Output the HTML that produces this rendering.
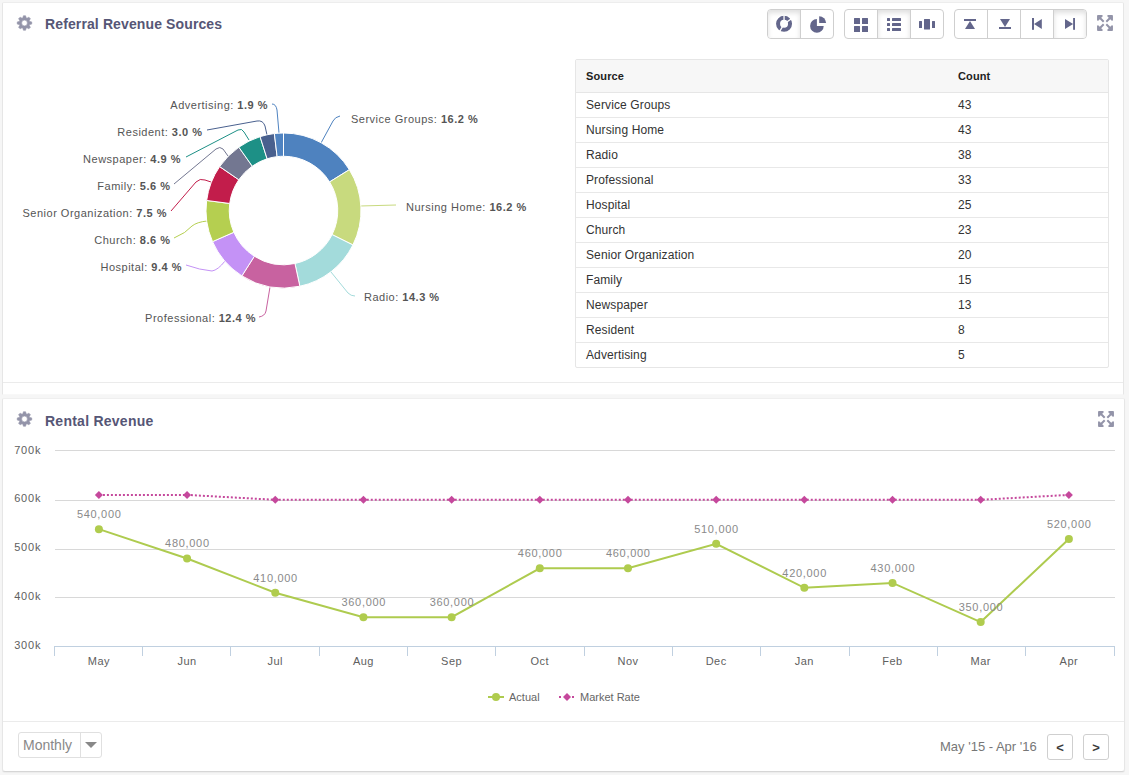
<!DOCTYPE html>
<html><head><meta charset="utf-8"><style>
*{margin:0;padding:0;box-sizing:border-box}
html,body{width:1129px;height:775px;overflow:hidden;background:#f6f6f6;font-family:"Liberation Sans",sans-serif}
.abs{position:absolute}
.panel{position:absolute;background:#fff;border:1px solid #e6e6e6;border-radius:3px}
.title{position:absolute;font-weight:bold;font-size:14px;color:#565676;line-height:16px;letter-spacing:0.12px}
.gear{position:absolute;width:16px;height:16px}
.bg{position:absolute;top:9px;height:30px;border:1px solid #cfcfcf;border-radius:4px;background:#fff;display:flex;overflow:hidden}
.bt{height:28px;width:33px;position:relative;border-left:1px solid #cfcfcf}
.bt:first-child{border-left:none;width:32px}
.bt.act{box-shadow:inset 0 3px 5px rgba(0,0,0,.125);background:#fff}
.bt svg{position:absolute;left:0;top:0}
.tbl{position:absolute;left:575px;top:59px;width:534px;border:1px solid #e6e6e6;border-radius:2px;font-size:12px;color:#333;letter-spacing:0.12px}
.th{height:33px;background:#f7f7f7;border-bottom:1px solid #e6e6e6;position:relative;font-weight:bold;font-size:11px;color:#222}
.tr{height:25px;border-top:1px solid #e8e8e8;position:relative}
.th + .tr{border-top:none;height:24px}
.c1,.c2{position:absolute;top:5px;line-height:14px}
.c1{left:10px} .c2{left:382px}
.th .c1,.th .c2{top:9px}
</style></head><body>
<div class="panel" style="left:2px;top:2px;width:1122px;height:393px;border-top-color:#ededed;border-bottom-color:#f8f8f8;border-radius:2px 2px 0 0"></div>
<div class="abs" style="left:3px;top:382px;width:1120px;height:1px;background:#ebebeb"></div>
<div class="panel" style="left:2px;top:398px;width:1123px;height:374px;border-top-color:#efefef;border-bottom-color:#d6d6d6;border-radius:2px 2px 3px 3px;box-shadow:0 1px 1px rgba(0,0,0,.04)"></div>
<div class="abs" style="left:3px;top:721px;width:1121px;height:1px;background:#ebebeb"></div>

<div class="gear" style="left:17px;top:15px"><svg width="16" height="16" viewBox="0 0 16 16" style="overflow:visible"><path fill="#9394a9" fill-rule="evenodd" stroke="#9394a9" stroke-width="0.6" stroke-linejoin="round" d="M5.88 2.85 L6.42 0.78 L8.58 0.78 L9.12 2.85 L9.99 3.21 L11.84 2.13 L13.37 3.66 L12.29 5.51 L12.65 6.38 L14.72 6.92 L14.72 9.08 L12.65 9.62 L12.29 10.49 L13.37 12.34 L11.84 13.87 L9.99 12.79 L9.12 13.15 L8.58 15.22 L6.42 15.22 L5.88 13.15 L5.01 12.79 L3.16 13.87 L1.63 12.34 L2.71 10.49 L2.35 9.62 L0.28 9.08 L0.28 6.92 L2.35 6.38 L2.71 5.51 L1.63 3.66 L3.16 2.13 L5.01 3.21ZM7.5 5.1A2.9 2.9 0 1 0 7.5 10.9A2.9 2.9 0 1 0 7.5 5.1Z"/></svg></div>
<div class="title" style="left:45px;top:16px">Referral Revenue Sources</div>
<div class="gear" style="left:17px;top:411px"><svg width="16" height="16" viewBox="0 0 16 16" style="overflow:visible"><path fill="#9394a9" fill-rule="evenodd" stroke="#9394a9" stroke-width="0.6" stroke-linejoin="round" d="M5.88 2.85 L6.42 0.78 L8.58 0.78 L9.12 2.85 L9.99 3.21 L11.84 2.13 L13.37 3.66 L12.29 5.51 L12.65 6.38 L14.72 6.92 L14.72 9.08 L12.65 9.62 L12.29 10.49 L13.37 12.34 L11.84 13.87 L9.99 12.79 L9.12 13.15 L8.58 15.22 L6.42 15.22 L5.88 13.15 L5.01 12.79 L3.16 13.87 L1.63 12.34 L2.71 10.49 L2.35 9.62 L0.28 9.08 L0.28 6.92 L2.35 6.38 L2.71 5.51 L1.63 3.66 L3.16 2.13 L5.01 3.21ZM7.5 5.1A2.9 2.9 0 1 0 7.5 10.9A2.9 2.9 0 1 0 7.5 5.1Z"/></svg></div>
<div class="title" style="left:45px;top:413px;letter-spacing:0.25px">Rental Revenue</div>
<div class="abs" style="left:1097px;top:15px;width:16px;height:16px"><svg width="16" height="16" viewBox="0 0 16 16" fill="#9394a9" stroke="#9394a9" stroke-linejoin="round" stroke-linecap="round"><g stroke-width="1.7"><path d="M0.9 0.9H4.9L0.9 4.9z"/><path d="M15.1 0.9H11.1L15.1 4.9z"/><path d="M0.9 15.1H4.9L0.9 11.1z"/><path d="M15.1 15.1H11.1L15.1 11.1z"/></g><g stroke-width="2" fill="none" stroke-linecap="butt"><path d="M2.5 2.5L6.7 6.7M13.5 2.5L9.3 6.7M2.5 13.5L6.7 9.3M13.5 13.5L9.3 9.3"/></g></svg></div>
<div class="abs" style="left:1098px;top:411px;width:16px;height:16px"><svg width="16" height="16" viewBox="0 0 16 16" fill="#9394a9" stroke="#9394a9" stroke-linejoin="round" stroke-linecap="round"><g stroke-width="1.7"><path d="M0.9 0.9H4.9L0.9 4.9z"/><path d="M15.1 0.9H11.1L15.1 4.9z"/><path d="M0.9 15.1H4.9L0.9 11.1z"/><path d="M15.1 15.1H11.1L15.1 11.1z"/></g><g stroke-width="2" fill="none" stroke-linecap="butt"><path d="M2.5 2.5L6.7 6.7M13.5 2.5L9.3 6.7M2.5 13.5L6.7 9.3M13.5 13.5L9.3 9.3"/></g></svg></div>

<div class="bg" style="left:767px;width:67px">
 <div class="bt act"><svg width="32" height="28" viewBox="0 0 32 28"><circle cx="16.05" cy="13.85" r="6" fill="none" stroke="#63668b" stroke-width="4"/><path d="M16.05 13.85L16.05 4.85" stroke="#fff" stroke-width="1.3"/><path d="M16.05 13.85L23.51 8.82" stroke="#fff" stroke-width="1.3"/><path d="M16.05 13.85L11.55 21.64" stroke="#fff" stroke-width="1.3"/></svg></div>
 <div class="bt"><svg width="32" height="28" viewBox="0 0 32 28"><path d="M15.9 9.1v6.8h6.8A6.8 6.8 0 1 1 15.9 9.1z" fill="#63668b"/><path d="M18.2 6.2v6.9h6.9A6.9 6.9 0 0 0 18.2 6.2z" fill="#63668b"/></svg></div>
</div>
<div class="bg" style="left:844px;width:100px">
 <div class="bt"><svg width="32" height="28" viewBox="0 0 32 28" fill="#63668b"><rect x="9" y="8" width="6" height="6" rx=".5"/><rect x="17" y="8" width="6" height="6" rx=".5"/><rect x="9" y="16" width="6" height="6" rx=".5"/><rect x="17" y="16" width="6" height="6" rx=".5"/></svg></div>
 <div class="bt act"><svg width="32" height="28" viewBox="0 0 32 28" fill="#63668b"><rect x="9" y="8" width="3" height="3" rx=".6"/><rect x="14" y="8" width="9" height="3" rx=".6"/><rect x="9" y="13" width="3" height="3" rx=".6"/><rect x="14" y="13" width="9" height="3" rx=".6"/><rect x="9" y="18" width="3" height="3" rx=".6"/><rect x="14" y="18" width="9" height="3" rx=".6"/></svg></div>
 <div class="bt"><svg width="32" height="28" viewBox="0 0 32 28" fill="#63668b"><rect x="8" y="11" width="3" height="7" rx=".5"/><rect x="13" y="9" width="6" height="10.6" rx=".5"/><rect x="21" y="11" width="3" height="7" rx=".5"/></svg></div>
</div>
<div class="bg" style="left:954px;width:133px">
 <div class="bt"><svg width="32" height="28" viewBox="0 0 32 28" fill="#63668b"><rect x="9" y="9" width="12" height="2"/><path d="M15 11L20 19H10z"/></svg></div>
 <div class="bt"><svg width="32" height="28" viewBox="0 0 32 28" fill="#63668b"><path d="M12 9H22L17 17z"/><rect x="11" y="17" width="12" height="2"/></svg></div>
 <div class="bt"><svg width="32" height="28" viewBox="0 0 32 28" fill="#63668b"><rect x="11" y="8" width="2" height="11.8"/><path d="M13 13.9L20.8 9V18.9z"/></svg></div>
 <div class="bt act"><svg width="32" height="28" viewBox="0 0 32 28" fill="#63668b"><rect x="19.1" y="8" width="1.9" height="11.8"/><path d="M19.1 13.9L11 9V18.9z"/></svg></div>
</div>

<svg class="abs" style="left:0;top:0" width="560" height="380" viewBox="0 0 560 380">
<g><path d="M340 116 Q335 117 333 121 L321 143" fill="none" stroke="#4e82bf" stroke-width="1"/><path d="M360 206 L396 205" fill="none" stroke="#c8da7e" stroke-width="1"/><path d="M331 272 L348 293 Q351 296 355 296" fill="none" stroke="#a3dbdb" stroke-width="1"/><path d="M270 287 L266 311 Q265 316 259 317" fill="none" stroke="#c862a0" stroke-width="1"/><path d="M186 265 Q200 270 212 271 Q218 270 225 261" fill="none" stroke="#c492f6" stroke-width="1"/><path d="M174 238 Q186 233 192 226 Q197 222 207 221" fill="none" stroke="#b5cf50" stroke-width="1"/><path d="M171 211 L196 182 Q200 178 205 180 L211 182" fill="none" stroke="#c21d4b" stroke-width="1"/><path d="M174 184 L216 149 Q220 146 223 149 L228 156" fill="none" stroke="#737791" stroke-width="1"/><path d="M186 157 L238 130 Q242 128 244 132 L249 140" fill="none" stroke="#1d9086" stroke-width="1"/><path d="M207 130 L257 121 Q263 120 265 126 L267 135" fill="none" stroke="#49608e" stroke-width="1"/><path d="M272 104 Q276 104 277 110 L279 133" fill="none" stroke="#4f83c1" stroke-width="1"/></g>
<g><path d="M283.5 133A77.5 77.5 0 0 1 349.36 169.66L329.6 181.91A54.25 54.25 0 0 0 283.5 156.25Z" fill="#4e82bf" stroke="#fff" stroke-width="1" stroke-linejoin="round"/><path d="M349.36 169.66A77.5 77.5 0 0 1 352.92 244.95L332.1 234.61A54.25 54.25 0 0 0 329.6 181.91Z" fill="#c8da7e" stroke="#fff" stroke-width="1" stroke-linejoin="round"/><path d="M352.92 244.95A77.5 77.5 0 0 1 299.85 286.26L294.95 263.53A54.25 54.25 0 0 0 332.1 234.61Z" fill="#a3dbdb" stroke="#fff" stroke-width="1" stroke-linejoin="round"/><path d="M299.85 286.26A77.5 77.5 0 0 1 241.88 275.88L254.37 256.26A54.25 54.25 0 0 0 294.95 263.53Z" fill="#c862a0" stroke="#fff" stroke-width="1" stroke-linejoin="round"/><path d="M241.88 275.88A77.5 77.5 0 0 1 212.53 241.63L233.82 232.29A54.25 54.25 0 0 0 254.37 256.26Z" fill="#c492f6" stroke="#fff" stroke-width="1" stroke-linejoin="round"/><path d="M212.53 241.63A77.5 77.5 0 0 1 206.65 200.46L229.71 203.47A54.25 54.25 0 0 0 233.82 232.29Z" fill="#b5cf50" stroke="#fff" stroke-width="1" stroke-linejoin="round"/><path d="M206.65 200.46A77.5 77.5 0 0 1 219.64 166.59L238.8 179.76A54.25 54.25 0 0 0 229.71 203.47Z" fill="#c21d4b" stroke="#fff" stroke-width="1" stroke-linejoin="round"/><path d="M219.64 166.59A77.5 77.5 0 0 1 238.84 147.16L252.24 166.16A54.25 54.25 0 0 0 238.8 179.76Z" fill="#737791" stroke="#fff" stroke-width="1" stroke-linejoin="round"/><path d="M238.84 147.16A77.5 77.5 0 0 1 260.07 136.63L267.1 158.79A54.25 54.25 0 0 0 252.24 166.16Z" fill="#1d9086" stroke="#fff" stroke-width="1" stroke-linejoin="round"/><path d="M260.07 136.63A77.5 77.5 0 0 1 274.37 133.54L277.11 156.63A54.25 54.25 0 0 0 267.1 158.79Z" fill="#49608e" stroke="#fff" stroke-width="1" stroke-linejoin="round"/><path d="M274.37 133.54A77.5 77.5 0 0 1 283.5 133L283.5 156.25A54.25 54.25 0 0 0 277.11 156.63Z" fill="#4f83c1" stroke="#fff" stroke-width="1" stroke-linejoin="round"/></g>
<g font-family="Liberation Sans, sans-serif" font-size="11" letter-spacing="0.5" fill="#555"><text x="351" y="123" text-anchor="start">Service Groups: <tspan font-weight="bold">16.2 %</tspan></text><text x="406" y="211" text-anchor="start">Nursing Home: <tspan font-weight="bold">16.2 %</tspan></text><text x="364" y="301" text-anchor="start">Radio: <tspan font-weight="bold">14.3 %</tspan></text><text x="256" y="322" text-anchor="end">Professional: <tspan font-weight="bold">12.4 %</tspan></text><text x="182" y="271" text-anchor="end">Hospital: <tspan font-weight="bold">9.4 %</tspan></text><text x="170.5" y="244" text-anchor="end">Church: <tspan font-weight="bold">8.6 %</tspan></text><text x="167" y="217" text-anchor="end">Senior Organization: <tspan font-weight="bold">7.5 %</tspan></text><text x="170.5" y="190" text-anchor="end">Family: <tspan font-weight="bold">5.6 %</tspan></text><text x="181" y="163" text-anchor="end">Newspaper: <tspan font-weight="bold">4.9 %</tspan></text><text x="202.5" y="136" text-anchor="end">Resident: <tspan font-weight="bold">3.0 %</tspan></text><text x="268" y="109" text-anchor="end">Advertising: <tspan font-weight="bold">1.9 %</tspan></text></g>
</svg>

<div class="tbl">
 <div class="th"><span class="c1">Source</span><span class="c2">Count</span></div>
 <div class="tr"><span class="c1">Service Groups</span><span class="c2">43</span></div><div class="tr"><span class="c1">Nursing Home</span><span class="c2">43</span></div><div class="tr"><span class="c1">Radio</span><span class="c2">38</span></div><div class="tr"><span class="c1">Professional</span><span class="c2">33</span></div><div class="tr"><span class="c1">Hospital</span><span class="c2">25</span></div><div class="tr"><span class="c1">Church</span><span class="c2">23</span></div><div class="tr"><span class="c1">Senior Organization</span><span class="c2">20</span></div><div class="tr"><span class="c1">Family</span><span class="c2">15</span></div><div class="tr"><span class="c1">Newspaper</span><span class="c2">13</span></div><div class="tr"><span class="c1">Resident</span><span class="c2">8</span></div><div class="tr"><span class="c1">Advertising</span><span class="c2">5</span></div>
</div>

<svg class="abs" style="left:0;top:0" width="1129" height="775" viewBox="0 0 1129 775">
<g font-family="Liberation Sans, sans-serif" font-size="11" letter-spacing="0.5"><path d="M55 450.5H1115" stroke="#d8d8d8" stroke-width="1"/><text x="41.2" y="454" text-anchor="end" letter-spacing="0.8" fill="#606060">700k</text><path d="M55 500.5H1115" stroke="#d8d8d8" stroke-width="1"/><text x="41.2" y="502" text-anchor="end" letter-spacing="0.8" fill="#606060">600k</text><path d="M55 549.5H1115" stroke="#d8d8d8" stroke-width="1"/><text x="41.2" y="551" text-anchor="end" letter-spacing="0.8" fill="#606060">500k</text><path d="M55 597.5H1115" stroke="#d8d8d8" stroke-width="1"/><text x="41.2" y="600" text-anchor="end" letter-spacing="0.8" fill="#606060">400k</text><text x="41.2" y="649" text-anchor="end" letter-spacing="0.8" fill="#606060">300k</text><path d="M54 646.5H1115" stroke="#c0d0e0" stroke-width="1"/><path d="M54.5 646V656" stroke="#c0d0e0" stroke-width="1"/><path d="M142.5 646V656" stroke="#c0d0e0" stroke-width="1"/><path d="M230.5 646V656" stroke="#c0d0e0" stroke-width="1"/><path d="M319.5 646V656" stroke="#c0d0e0" stroke-width="1"/><path d="M407.5 646V656" stroke="#c0d0e0" stroke-width="1"/><path d="M495.5 646V656" stroke="#c0d0e0" stroke-width="1"/><path d="M584.5 646V656" stroke="#c0d0e0" stroke-width="1"/><path d="M672.5 646V656" stroke="#c0d0e0" stroke-width="1"/><path d="M760.5 646V656" stroke="#c0d0e0" stroke-width="1"/><path d="M849.5 646V656" stroke="#c0d0e0" stroke-width="1"/><path d="M937.5 646V656" stroke="#c0d0e0" stroke-width="1"/><path d="M1025.5 646V656" stroke="#c0d0e0" stroke-width="1"/><path d="M1114.5 646V656" stroke="#c0d0e0" stroke-width="1"/><text x="98.9" y="665" text-anchor="middle" fill="#606060">May</text><text x="187.08" y="665" text-anchor="middle" fill="#606060">Jun</text><text x="275.26" y="665" text-anchor="middle" fill="#606060">Jul</text><text x="363.44" y="665" text-anchor="middle" fill="#606060">Aug</text><text x="451.62" y="665" text-anchor="middle" fill="#606060">Sep</text><text x="539.8" y="665" text-anchor="middle" fill="#606060">Oct</text><text x="627.98" y="665" text-anchor="middle" fill="#606060">Nov</text><text x="716.16" y="665" text-anchor="middle" fill="#606060">Dec</text><text x="804.34" y="665" text-anchor="middle" fill="#606060">Jan</text><text x="892.52" y="665" text-anchor="middle" fill="#606060">Feb</text><text x="980.7" y="665" text-anchor="middle" fill="#606060">Mar</text><text x="1068.88" y="665" text-anchor="middle" fill="#606060">Apr</text><polyline points="98.9,494.91 187.08,494.91 275.26,499.8 363.44,499.8 451.62,499.8 539.8,499.8 627.98,499.8 716.16,499.8 804.34,499.8 892.52,499.8 980.7,499.8 1068.88,494.91" fill="none" stroke="#c5489c" stroke-width="2" stroke-dasharray="2,2"/><path d="M98.9 490.91L102.9 494.91L98.9 498.91L94.9 494.91Z" fill="#c5489c"/><path d="M187.08 490.91L191.08 494.91L187.08 498.91L183.08 494.91Z" fill="#c5489c"/><path d="M275.26 495.8L279.26 499.8L275.26 503.8L271.26 499.8Z" fill="#c5489c"/><path d="M363.44 495.8L367.44 499.8L363.44 503.8L359.44 499.8Z" fill="#c5489c"/><path d="M451.62 495.8L455.62 499.8L451.62 503.8L447.62 499.8Z" fill="#c5489c"/><path d="M539.8 495.8L543.8 499.8L539.8 503.8L535.8 499.8Z" fill="#c5489c"/><path d="M627.98 495.8L631.98 499.8L627.98 503.8L623.98 499.8Z" fill="#c5489c"/><path d="M716.16 495.8L720.16 499.8L716.16 503.8L712.16 499.8Z" fill="#c5489c"/><path d="M804.34 495.8L808.34 499.8L804.34 503.8L800.34 499.8Z" fill="#c5489c"/><path d="M892.52 495.8L896.52 499.8L892.52 503.8L888.52 499.8Z" fill="#c5489c"/><path d="M980.7 495.8L984.7 499.8L980.7 503.8L976.7 499.8Z" fill="#c5489c"/><path d="M1068.88 490.91L1072.88 494.91L1068.88 498.91L1064.88 494.91Z" fill="#c5489c"/><polyline points="98.9,529.14 187.08,558.48 275.26,592.71 363.44,617.16 451.62,617.16 539.8,568.26 627.98,568.26 716.16,543.81 804.34,587.82 892.52,582.93 980.7,622.05 1068.88,538.92" fill="none" stroke="#aecb4f" stroke-width="2"/><circle cx="98.9" cy="529.14" r="4" fill="#b0cc4e"/><text x="99.25" y="518.14" text-anchor="middle" letter-spacing="0.7" fill="#8a8a8a">540,000</text><circle cx="187.08" cy="558.48" r="4" fill="#b0cc4e"/><text x="187.43" y="547.48" text-anchor="middle" letter-spacing="0.7" fill="#8a8a8a">480,000</text><circle cx="275.26" cy="592.71" r="4" fill="#b0cc4e"/><text x="275.61" y="581.71" text-anchor="middle" letter-spacing="0.7" fill="#8a8a8a">410,000</text><circle cx="363.44" cy="617.16" r="4" fill="#b0cc4e"/><text x="363.79" y="606.16" text-anchor="middle" letter-spacing="0.7" fill="#8a8a8a">360,000</text><circle cx="451.62" cy="617.16" r="4" fill="#b0cc4e"/><text x="451.97" y="606.16" text-anchor="middle" letter-spacing="0.7" fill="#8a8a8a">360,000</text><circle cx="539.8" cy="568.26" r="4" fill="#b0cc4e"/><text x="540.15" y="557.26" text-anchor="middle" letter-spacing="0.7" fill="#8a8a8a">460,000</text><circle cx="627.98" cy="568.26" r="4" fill="#b0cc4e"/><text x="628.33" y="557.26" text-anchor="middle" letter-spacing="0.7" fill="#8a8a8a">460,000</text><circle cx="716.16" cy="543.81" r="4" fill="#b0cc4e"/><text x="716.51" y="532.81" text-anchor="middle" letter-spacing="0.7" fill="#8a8a8a">510,000</text><circle cx="804.34" cy="587.82" r="4" fill="#b0cc4e"/><text x="804.69" y="576.82" text-anchor="middle" letter-spacing="0.7" fill="#8a8a8a">420,000</text><circle cx="892.52" cy="582.93" r="4" fill="#b0cc4e"/><text x="892.87" y="571.93" text-anchor="middle" letter-spacing="0.7" fill="#8a8a8a">430,000</text><circle cx="980.7" cy="622.05" r="4" fill="#b0cc4e"/><text x="981.05" y="611.05" text-anchor="middle" letter-spacing="0.7" fill="#8a8a8a">350,000</text><circle cx="1068.88" cy="538.92" r="4" fill="#b0cc4e"/><text x="1069.23" y="527.92" text-anchor="middle" letter-spacing="0.7" fill="#8a8a8a">520,000</text><path d="M488 697H504" stroke="#aecb4f" stroke-width="2"/><circle cx="496" cy="697" r="4" fill="#b0cc4e"/><text x="509" y="701" font-size="11" letter-spacing="0" fill="#666">Actual</text><rect x="559" y="696" width="2" height="2" fill="#c5489c"/><rect x="572" y="696" width="2" height="2" fill="#c5489c"/><path d="M567 693L571 697L567 701L563 697Z" fill="#c5489c"/><text x="580" y="701" font-size="11" letter-spacing="0" fill="#666">Market Rate</text></g></svg>

<div class="abs" style="left:18px;top:732px;width:84px;height:26px;border:1px solid #e0e0e0;border-radius:3px"></div>
<div class="abs" style="left:80px;top:733px;width:1px;height:24px;background:#e0e0e0"></div>
<div class="abs" style="left:23px;top:737px;font-size:14px;color:#888;line-height:16px">Monthly</div>
<svg class="abs" style="left:84px;top:741px" width="14" height="8"><path d="M1 1H13L7 7z" fill="#888"/></svg>
<div class="abs" style="left:940px;top:739px;font-size:13px;color:#777;line-height:15px">May '15 - Apr '16</div>
<div class="abs" style="left:1047px;top:734px;width:26px;height:26px;border:1px solid #cfcfcf;border-radius:3px;font-size:13px;font-weight:bold;color:#3a3a3a;text-align:center;line-height:25px">&lt;</div>
<div class="abs" style="left:1083px;top:734px;width:26px;height:26px;border:1px solid #cfcfcf;border-radius:3px;font-size:13px;font-weight:bold;color:#3a3a3a;text-align:center;line-height:25px">&gt;</div>
</body></html>
